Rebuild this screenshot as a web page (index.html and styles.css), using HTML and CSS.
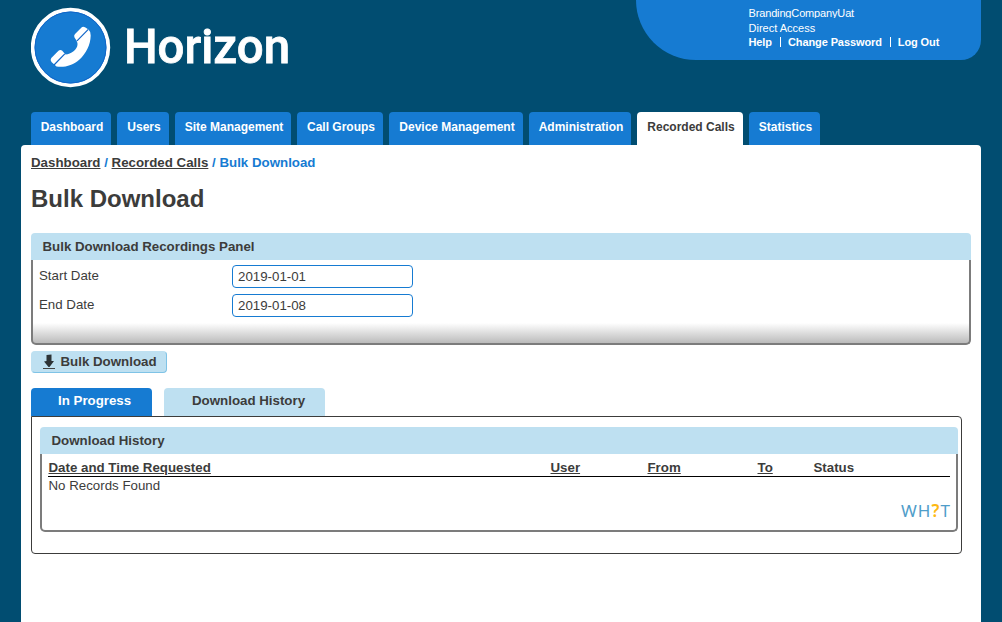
FILE: index.html
```html
<!DOCTYPE html>
<html lang="en">
<head>
  <meta charset="UTF-8">
  <meta name="viewport" content="width=device-width, initial-scale=1.0">
  <title>Bulk Download</title>
  <link rel="stylesheet" href="styles.css">
</head>
<body>
<div class="wrapper">
  <header class="header">
    <svg class="logo" width="270" height="82" viewBox="0 0 270 82">
      <circle cx="39.500" cy="40.500" r="37.800" fill="#167bd2" stroke="#fff" stroke-width="3.800"/>
      <circle cx="39.500" cy="40.500" r="35.500" fill="none" stroke="#1266c8" stroke-width="1"/>
      <path d="M43.500 30.500 Q42.500 28.500 44 27 L50.500 20.500 Q52 19.300 54 20.300 L57.500 22.500 Q59.800 24.500 59.700 28.500 C59.500 38 55 46.500 48.500 52.500 C42 58.500 33 60.800 25.500 59.500 L20.500 55 Q18.800 53 20.300 51 L27.500 43.800 Q29 42.500 31 43.500 L34.500 47.500 C40 47.500 46.500 42 46.500 37.500 Q46.500 35.500 45.500 33.500 Z" fill="#fff"/>
      <path d="M46 33.800 L57.300 22.300 M23 58 L33.800 46.800" stroke="#1266c8" stroke-width="1.200"/>
      <text class="logo-text" x="93" y="56" textLength="166" lengthAdjust="spacingAndGlyphs">Horizon</text>
    </svg>
    <div class="account">
      <div class="company">BrandingCompanyUat</div>
      <div>Direct Access</div>
      <div class="account-links"><a href="#">Help</a><a href="#">Change Password</a><a href="#">Log Out</a></div>
    </div>
  </header>
  <nav class="nav">
    <a class="nav-dashboard" href="#">Dashboard</a>
    <a class="nav-users" href="#">Users</a>
    <a class="nav-sites" href="#">Site Management</a>
    <a class="nav-groups" href="#">Call Groups</a>
    <a class="nav-devices" href="#">Device Management</a>
    <a class="nav-admin" href="#">Administration</a>
    <a class="nav-calls active" href="#">Recorded Calls</a>
    <a class="nav-stats" href="#">Statistics</a>
  </nav>
  <main class="content">
    <div class="breadcrumb"><a href="#">Dashboard</a> / <a href="#">Recorded Calls</a> / Bulk Download</div>
    <h1>Bulk Download</h1>
    <div class="panel">
      <div class="panel-title">Bulk Download Recordings Panel</div>
      <div class="panel-body form-body">
        <div class="form-group">
          <label for="startDate">Start Date</label>
          <input type="text" id="startDate" value="2019-01-01">
        </div>
        <div class="form-group">
          <label for="endDate">End Date</label>
          <input type="text" id="endDate" value="2019-01-08">
        </div>
      </div>
    </div>
    <button class="download-btn">
      <svg width="12" height="15" viewBox="0 0 12 15">
        <path d="M3.500 1L8.500 0.500V7H11L6.500 13H5.500L1 7.500L3.500 7Z" fill="#2d3336"/>
        <path d="M0 14.500H12" stroke="#444" stroke-width="1"/>
      </svg>
      <span>Bulk Download</span>
    </button>
    <div class="tabs">
      <a class="tab tab-active" href="#">In Progress</a>
      <a class="tab tab-history" href="#">Download History</a>
    </div>
    <div class="tab-content">
      <div class="panel">
        <div class="panel-title">Download History</div>
        <div class="panel-body history-body">
          <table class="history">
            <thead>
              <tr>
                <th class="col-date"><a href="#">Date and Time Requested</a></th>
                <th class="col-user"><a href="#">User</a></th>
                <th class="col-from"><a href="#">From</a></th>
                <th class="col-to"><a href="#">To</a></th>
                <th>Status</th>
              </tr>
            </thead>
            <tbody>
              <tr><td colspan="5">No Records Found</td></tr>
            </tbody>
          </table>
          <div class="what">WH<span>?</span>T</div>
        </div>
      </div>
    </div>
  </main>
</div>
</body>
</html>
```
FILE: styles.css
```css
* {
  box-sizing: border-box;
}
body {
  margin: 0;
  background-color: #014d71;
  color: #3c3c3b;
  font-family: Arial, "Liberation Sans", sans-serif;
  font-size: 13.3px;
  overflow: hidden;
}
a {
  color: inherit;
}
.wrapper {
  width: 960px;
  height: 622px;
  margin: 0 auto;
  display: flex;
  flex-direction: column;
}
.header {
  display: flex;
  justify-content: space-between;
  align-items: flex-start;
  height: 112px;
  padding-left: 10px;
}
.logo {
  margin-top: 7px;
}
.logo-text {
  font-family: Roboto, sans-serif;
  font-size: 49px;
  font-weight: 500;
  fill: #fff;
  stroke: #fff;
  stroke-width: 0.8px;
}
.account {
  width: 345px;
  height: 60px;
  padding: 6px 0 0 112.5px;
  border-radius: 0 0 20px 60px;
  background-color: #167bd2;
  color: #fff;
  font-size: 11px;
  line-height: 15px;
}
.company {
  height: 12px;
  margin-bottom: 3px;
  letter-spacing: -0.15px;
  overflow: hidden;
}
.account-links {
  line-height: 13px;
}
.account-links a {
  font-weight: bold;
  letter-spacing: -0.1px;
  text-decoration: none;
}
.account-links a + a {
  margin-left: 8px;
  padding-left: 8px;
  background: linear-gradient(#fff, #fff) 0 1px / 1px 10px no-repeat;
}
.nav {
  display: flex;
  gap: 6px;
  padding-left: 10px;
}
.nav a {
  height: 33px;
  padding-left: 2px;
  border-radius: 4px 4px 0 0;
  background-color: #167bd2;
  color: #fff;
  font-size: 12px;
  font-weight: bold;
  line-height: 30px;
  text-align: center;
  text-decoration: none;
  white-space: nowrap;
}
.nav .active {
  background-color: #fff;
  color: #3c3c3b;
}
.nav-dashboard { width: 80px; }
.nav-users { width: 52px; }
.nav-sites { width: 116px; }
.nav-groups { width: 86px; }
.nav-devices { width: 134px; }
.nav-admin { width: 102px; }
.nav-calls { width: 106px; }
.nav-stats { width: 71px; }
.content {
  flex: 1;
  padding: 9px 10px 0;
  border-radius: 4px 4px 0 0;
  background-color: #fff;
}
.breadcrumb {
  color: #167bd2;
  font-weight: bold;
  line-height: 17px;
}
.breadcrumb a {
  color: #3c3c3b;
}
h1 {
  margin: 14px 0 20px;
  font-size: 24px;
  line-height: 28px;
}
.panel-title {
  height: 27px;
  padding-left: 11.5px;
  border-radius: 4px 4px 0 0;
  background-color: #bee0f1;
  font-weight: bold;
  line-height: 27px;
}
.panel-body {
  border: 2px solid #7c7c7c;
  border-top: 0;
  border-radius: 0 0 5px 5px;
}
.form-body {
  height: 85px;
  padding: 5px 0 0 6px;
  background: linear-gradient(#fff, #bbb) 0 100% / 100% 20px no-repeat;
}
.form-group {
  display: flex;
  height: 23px;
  margin-bottom: 6px;
}
.form-group label {
  width: 193px;
  line-height: 21px;
}
.form-group input {
  width: 181px;
  padding: 0 5px;
  border: 1px solid #167bd2;
  border-radius: 4px;
  color: #3c3c3b;
  font: inherit;
}
.download-btn {
  display: flex;
  align-items: center;
  gap: 5.5px;
  width: 136px;
  height: 22px;
  margin: 6px 0 15px;
  padding: 0 0 1px 11px;
  border: 1px solid #bee0f1;
  border-right-color: #7fc3e6;
  border-bottom-color: #7fc3e6;
  border-radius: 4px;
  background-color: #bee0f1;
  color: #3c3c3b;
  font: inherit;
  font-weight: bold;
  white-space: nowrap;
}
.tabs {
  display: flex;
  gap: 12px;
}
.tab {
  height: 28px;
  border-radius: 4px 4px 0 0;
  background-color: #bee0f1;
  font-weight: bold;
  line-height: 26px;
  text-decoration: none;
}
.tab-active {
  width: 121px;
  padding-left: 27px;
  background-color: #167bd2;
  color: #fff;
}
.tab-history {
  width: 161px;
  padding-left: 28px;
}
.tab-content {
  width: 931px;
  height: 138px;
  padding: 10px 3px 0 8px;
  border: 1px solid #3c3c3b;
  border-radius: 0 4px 4px 4px;
}
.history-body {
  height: 78px;
  padding: 5px 6px 0;
}
.history {
  width: 902px;
  border-collapse: separate;
  border-spacing: 0;
  table-layout: fixed;
}
.history th {
  height: 18px;
  padding: 0 0 0 0.5px;
  border-bottom: 1px solid #000;
  line-height: 17px;
  text-align: left;
}
.history td {
  height: 17px;
  padding: 0 0 0 0.5px;
  line-height: 17px;
}
.col-date { width: 502px; }
.col-user { width: 97px; }
.col-from { width: 110px; }
.col-to { width: 56px; }
.what {
  margin: 7px -1px 0 0;
  color: #4f9dc9;
  font-family: "Noto Sans", sans-serif;
  font-size: 17px;
  letter-spacing: 1.1px;
  line-height: 20px;
  text-align: right;
}
.what span {
  color: #fdb913;
  font-weight: 600;
}
```
